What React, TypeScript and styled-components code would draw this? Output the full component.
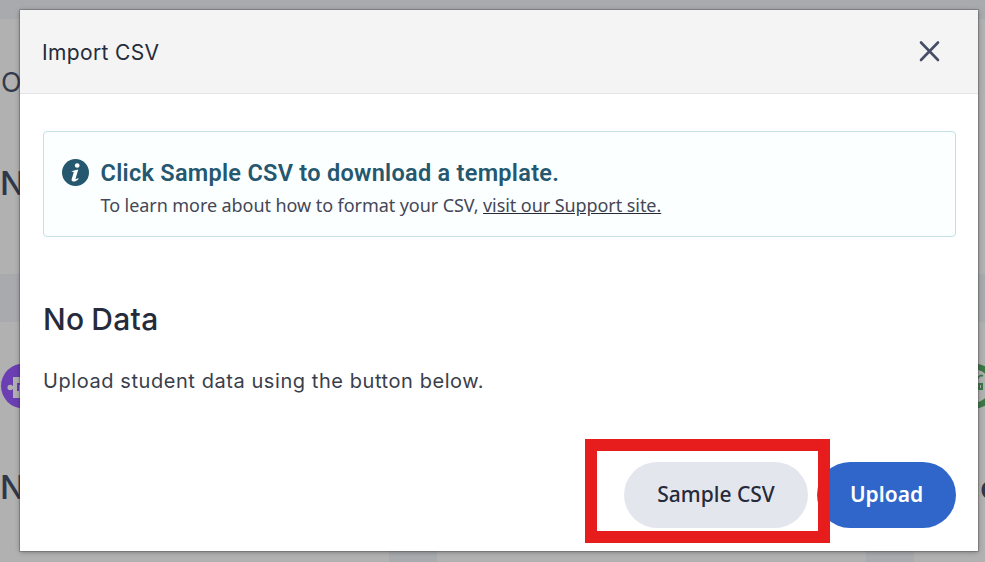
import React from "react";
import styled, { createGlobalStyle } from "styled-components";

const GlobalStyle = createGlobalStyle`
  * { box-sizing: border-box; }
  body { margin: 0; background: #a9aaae; overflow: hidden; }
  h1, h2, h3, p { margin: 0; font-weight: 400; }
  button { border: 0; padding: 0; cursor: pointer; }
`;

const Screen = styled.div`
  position: relative;
  width: 985px;
  height: 562px;
  overflow: hidden;
  background: #a9aaae;
`;

const Page = styled.div`
  display: grid;
  grid-template-columns: 389px 429px 71px;
  grid-template-rows: 255px 240px;
  column-gap: 48px;
  row-gap: 48px;
  padding-top: 19px;
`;

const Card = styled.section<{ $top: number; $gap: number }>`
  display: flex;
  flex-direction: column;
  gap: ${(p) => p.$gap}px;
  padding-top: ${(p) => p.$top}px;
  background: #b1b1b1;
  overflow: hidden;
`;

const CardLabel = styled.div`
  padding-left: 1px;
  font: 400 27px/32px Inter, sans-serif;
  color: #343b4d;
`;

const CardValue = styled.div<{ $indent?: number }>`
  padding-left: ${(p) => p.$indent ?? 0}px;
  font: 500 33px/40px Inter, sans-serif;
  color: #30374a;
`;

const CardIcon = styled.svg<{ $indent: number }>`
  display: block;
  flex: none;
  width: 46px;
  height: 46px;
  margin-left: ${(p) => p.$indent}px;
`;

const Dialog = styled.div`
  position: absolute;
  top: 10px;
  left: 20px;
  width: 958px;
  height: 541px;
  display: flex;
  flex-direction: column;
  background: #fff;
  box-shadow: 0 0 0 1px rgba(70, 70, 70, 0.32), 0 1px 5px rgba(0, 0, 0, 0.34);
`;

const Header = styled.header`
  display: flex;
  align-items: center;
  justify-content: space-between;
  height: 84px;
  padding: 0 38px 0 22px;
  background: #f4f4f4;
  border-bottom: 1px solid #e3e4e5;
`;

const Title = styled.h1`
  padding-top: 2px;
  font: 400 21px/30px Inter, sans-serif;
  letter-spacing: 0.35px;
  color: #252b3a;
`;

const CloseButton = styled.button`
  display: flex;
  padding-bottom: 2px;
  background: none;
`;

const Body = styled.main`
  display: flex;
  flex-direction: column;
  flex: 1;
  padding: 37px 22px 0 23px;
`;

const Notice = styled.div`
  display: flex;
  gap: 11.5px;
  height: 106px;
  padding: 26px 18px 0;
  background: #fbffff;
  border: 1px solid #c3dfe8;
  border-radius: 4px;
`;

const InfoIcon = styled.svg`
  flex: none;
  width: 27px;
  height: 27px;
  margin-top: 1px;
`;

const NoticeTitle = styled.h2`
  font: 600 23.5px/30px Roboto, sans-serif;
  letter-spacing: 0.28px;
  color: #25576f;
  white-space: nowrap;
`;

const NoticeText = styled.p`
  margin-top: 4px;
  font: 400 18px/26px "Noto Sans", sans-serif;
  letter-spacing: -0.07px;
  color: #454756;
  white-space: nowrap;
`;

const SupportLink = styled.a`
  color: inherit;
  text-decoration: underline;
  text-decoration-color: #252b3a;
`;

const EmptyTitle = styled.h2`
  margin-top: 62px;
  font: 500 30px/40px Inter, sans-serif;
  letter-spacing: 0.3px;
  word-spacing: -1.5px;
  color: #252b3a;
`;

const EmptyText = styled.p`
  margin-top: 28px;
  font: 400 20px/28px Inter, sans-serif;
  letter-spacing: 0.57px;
  color: #3a3e4b;
  white-space: nowrap;
`;

const Actions = styled.footer`
  display: flex;
  justify-content: flex-end;
  gap: 9px;
  padding: 0 22px 23px 0;
`;

const Button = styled.button<{ $primary?: boolean }>`
  width: ${(p) => (p.$primary ? 139 : 184)}px;
  height: 66px;
  padding-bottom: 2px;
  border-radius: 33px;
  background: ${(p) => (p.$primary ? "#3066c9" : "#e4e6ee")};
  color: ${(p) => (p.$primary ? "#fff" : "#252b3a")};
  font: ${(p) => (p.$primary ? 600 : 500)} 21px/28px "Noto Sans", sans-serif;
`;

const Highlight = styled.div`
  position: absolute;
  top: 439px;
  left: 585px;
  width: 245px;
  height: 104px;
  border: 12px solid #e71c1c;
  pointer-events: none;
`;

export default function App() {
  return (
    <>
      <GlobalStyle />
      <Screen>
        <Page aria-hidden>
          <Card $top={48} $gap={64}>
            <CardLabel>O</CardLabel>
            <CardValue>N</CardValue>
          </Card>
          <Card $top={0} $gap={0} />
          <Card $top={0} $gap={0} />
          <Card $top={41} $gap={58}>
            <CardIcon $indent={0} viewBox="0 0 46 46">
              <circle cx="23.5" cy="23" r="22.5" fill="#6b3eb3" />
              <circle cx="10.3" cy="24.5" r="2.8" fill="#b0b0b0" />
              <path d="M13 14h18v21H13v-9h-3v-3h3z" fill="#b0b0b0" />
              <path d="M18 28v-7h8" fill="none" stroke="#6b3eb3" strokeWidth="2" />
            </CardIcon>
            <CardValue>N</CardValue>
          </Card>
          <Card $top={0} $gap={0} />
          <Card $top={41} $gap={58}>
            <CardIcon $indent={37} viewBox="0 0 46 46">
              <circle cx="23" cy="23" r="19.5" fill="none" stroke="#3b7645" strokeWidth="6" />
              <path d="M27 15.5c1-3 3-3.5 5-2.5" fill="none" stroke="#3b7645" strokeWidth="1.8" />
              <path d="M26 20h6v7h-6zM29 22v3h1v-3z" fill="#3b7645" fillRule="evenodd" />
            </CardIcon>
            <CardValue $indent={66}>c</CardValue>
          </Card>
        </Page>

        <Dialog role="dialog" aria-label="Import CSV">
          <Header>
            <Title>Import CSV</Title>
            <CloseButton aria-label="Close">
              <svg width="21" height="22" viewBox="0 0 21 22">
                <path d="M2 2.5 19 20M19 2.5 2 20" stroke="#464e66" strokeWidth="2.6" strokeLinecap="round" />
              </svg>
            </CloseButton>
          </Header>
          <Body>
            <Notice>
              <InfoIcon viewBox="0 0 27 27">
                <circle cx="13.5" cy="13.5" r="13.5" fill="#25576f" />
                <ellipse cx="15.2" cy="6.5" rx="2.35" ry="2.2" fill="#fff" />
                <path
                  d="M9.8 12.2c2-.7 4-1.2 6.5-1.8l-2.7 9.2c-.2.9.4.7 1.3.2l1.3-.7.3.8c-1.8 1.7-3.6 2.7-5.1 2.7-1.5 0-2.1-1-1.7-2.5l2-6.7c.2-.8-.7-.7-2-.4z"
                  fill="#fff"
                />
              </InfoIcon>
              <div>
                <NoticeTitle>Click Sample CSV to download a template.</NoticeTitle>
                <NoticeText>
                  To learn more about how to format your CSV,{" "}
                  <SupportLink>visit our Support site.</SupportLink>
                </NoticeText>
              </div>
            </Notice>
            <EmptyTitle>No Data</EmptyTitle>
            <EmptyText>Upload student data using the button below.</EmptyText>
          </Body>
          <Actions>
            <Button>Sample CSV</Button>
            <Button $primary>Upload</Button>
          </Actions>
        </Dialog>
        <Highlight />
      </Screen>
    </>
  );
}
